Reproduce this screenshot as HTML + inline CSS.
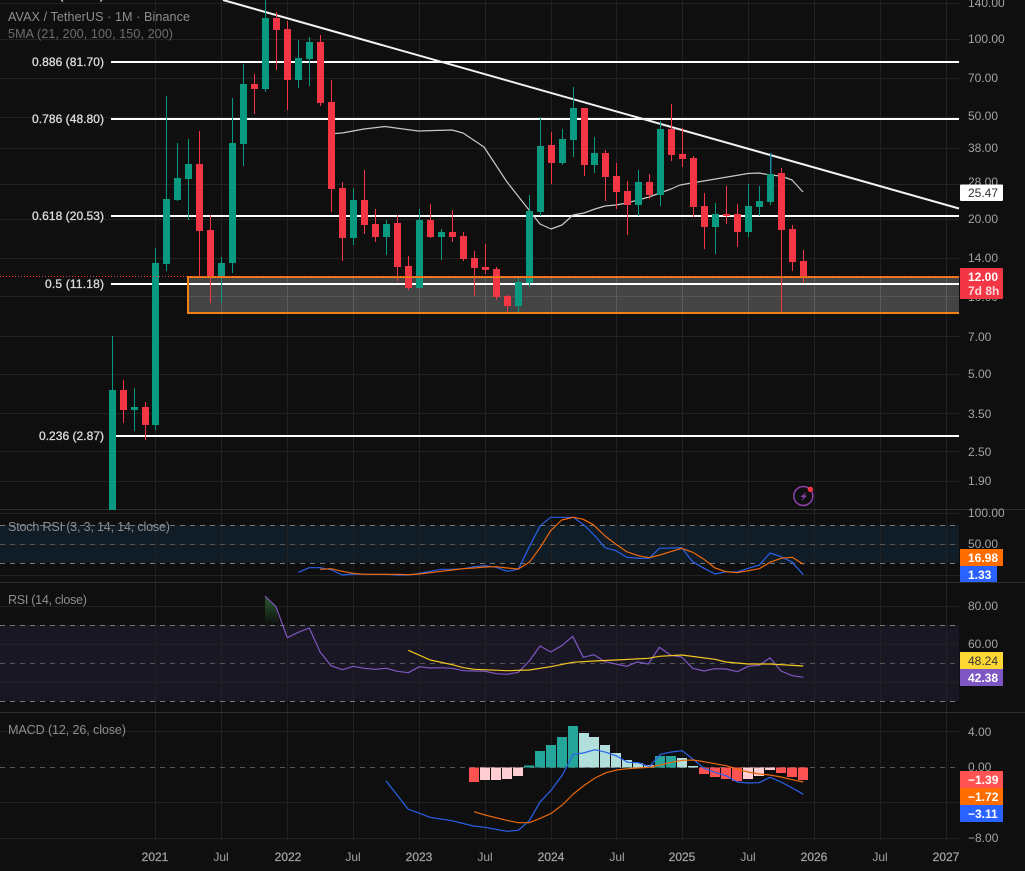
<!DOCTYPE html>
<html><head><meta charset="utf-8"><title>AVAX / TetherUS</title>
<style>
html,body{margin:0;padding:0;background:#0f0f0f;width:1025px;height:871px;overflow:hidden}
svg{display:block;font-family:"Liberation Sans",sans-serif;font-size:12px}
.ax{fill:#a3a3a3}
.lg{font-size:12.6px}
.fib{fill:#dedede;stroke:#dedede;stroke-width:.3px;text-anchor:end}
.t{fill:#a3a3a3;text-anchor:middle}
.y{stroke:#a3a3a3;stroke-width:.25px}
.b{fill:#fff;font-weight:bold}
.ln{fill:none;stroke-width:1.2;stroke-linejoin:round}
</style></head><body>
<svg width="1025" height="871" viewBox="0 0 1025 871" xmlns="http://www.w3.org/2000/svg">
<rect width="1025" height="871" fill="#0f0f0f"/>
<!-- bands -->
<rect x="0" y="525" width="959" height="38" fill="#101c26"/>
<rect x="0" y="625" width="959" height="76" fill="#1a1724"/>
<!-- grid -->
<path stroke="#222" stroke-width="1" fill="none" shape-rendering="crispEdges" d="M155.5 0V840M221.5 0V840M287.5 0V840M353.5 0V840M419.5 0V840M485.5 0V840M551.5 0V840M616.5 0V840M682.5 0V840M748.5 0V840M814.5 0V840M880.5 0V840M946.5 0V840
M0 3.5H959M0 39.5H959M0 78.5H959M0 117.5H959M0 148.5H959M0 184.5H959M0 219.5H959M0 258.5H959M0 296.5H959M0 336.5H959M0 374.5H959M0 413.5H959M0 451.5H959M0 481.5H959M0 513.5H959M0 544.5H959M0 575.5H959M0 606.5H959M0 644.5H959M0 682.5H959M0 731.5H959M0 802.5H959M0 838.5H959"/>
<!-- pane separators -->
<path stroke="#2e2e2e" stroke-width="1" shape-rendering="crispEdges" d="M0 509.5H1025M0 582.5H1025M0 712.5H1025"/>
<!-- dashed levels -->
<path stroke="#787878" stroke-width="1" stroke-dasharray="5 5" shape-rendering="crispEdges" d="M0 525.5H959M0 563.5H959M0 625.5H959M0 701.5H959"/>
<path stroke="#565656" stroke-width="1" stroke-dasharray="5 5" shape-rendering="crispEdges" d="M0 544.5H959M0 663.5H959M0 767.5H959"/>
<!-- zone -->
<rect x="188" y="277" width="771" height="36" fill="#444444"/>
<path stroke="#555" stroke-width="1" shape-rendering="crispEdges" d="M188 296.5H959"/>
<path stroke="#5c5c5c" stroke-width="1" shape-rendering="crispEdges" d="M221.5 277V313M287.5 277V313M353.5 277V313M419.5 277V313M485.5 277V313M551.5 277V313M616.5 277V313M682.5 277V313M748.5 277V313M814.5 277V313M880.5 277V313M946.5 277V313"/>
<!-- fib lines -->
<path stroke="#fff" stroke-width="2" shape-rendering="crispEdges" d="M111 62H959M111 119H959M111 216H959M111 284H959M111 436H959"/>
<!-- SMA -->
<polyline class="ln" stroke="#c8c8c8" stroke-width="1" points="335,133.5 342,133 364,129 385,126.5 418,131 452,130 463,133 484,147 507,182 529,210 540,224 551,229 562,225 573,215 584,213 595,209 605,206 616,205 627,203 649,197 660,193 671,189 680,185 748,173.5 759,173 770,175 781,176 792,180 803,192"/>
<!-- trend -->
<line x1="223" y1="0" x2="959" y2="208.5" stroke="#f2f2f2" stroke-width="2"/>
<!-- candles -->
<g shape-rendering="crispEdges" fill="none">
<path stroke="#089981" stroke-width="1" d="M112.5 336V390M155.5 248V263M155.5 425V430M166.5 96V199M166.5 264V271M177.5 143V178M177.5 200V201M188.5 139V164M188.5 179V220M134.5 388V407M134.5 410V431M221.5 257V263M221.5 277V303M232.5 98V143M232.5 263V273M243.5 64V84M243.5 144V166M265.5 0V18M265.5 89V92M298.5 40V58M298.5 80V88M309.5 37V42M309.5 59V86M353.5 188V200M353.5 238V245M386.5 220V224M386.5 237V255M419.5 209V220M441.5 229V232M441.5 237V260M518.5 277V282M518.5 306V312M529.5 195V211M529.5 283V287M540.5 117V146M540.5 212V216M562.5 129V139M562.5 163V165M573.5 87V108M573.5 140V157M594.5 137V153M594.5 165V173M638.5 170V182M638.5 205V216M660.5 121V129M660.5 195V206M715.5 203V214M715.5 227V254M748.5 184V206M748.5 232V237M759.5 186V201M759.5 207V216M770.5 202V205"/>
<path stroke="#1b8aa6" stroke-width="1.5" d="M770.5 153V174"/>
<path stroke="#f23645" stroke-width="1" d="M123.5 380V390M123.5 410V423M145.5 402V407M145.5 425V440M199.5 131V164M199.5 231V277M210.5 215V230M210.5 277V303M254.5 74V84M254.5 89V114M276.5 12V18M276.5 30V70M287.5 21V29M287.5 80V110M320.5 35V42M320.5 103V106M331.5 80V102M331.5 189V212M342.5 182V188M342.5 238V261M364.5 170V200M364.5 225V234M375.5 209V224M375.5 237V242M397.5 215V223M397.5 267V281M408.5 256V266M408.5 288V290M430.5 204V220M430.5 237V238M452.5 210V232M452.5 237V242M463.5 232V236M463.5 259V261M474.5 251V258M474.5 268V296M485.5 244V267M485.5 270V274M496.5 267V269M496.5 297V300M507.5 295V296M507.5 306V313M551.5 132V145M551.5 163V184M584.5 108V176M605.5 150V153M605.5 177V201M616.5 163V176M616.5 192V209M627.5 181V191M627.5 205V235M649.5 174V182M649.5 195V199M671.5 104V129M671.5 155V161M682.5 128V154M682.5 159V167M693.5 156V158M693.5 207V217M704.5 193V206M704.5 227V249M726.5 186V214M726.5 216V224M737.5 204V214M737.5 232V247M781.5 168V173M781.5 230V313M792.5 225V229M792.5 262V271M803.5 250V261M803.5 277V283"/>
<path stroke="#089981" stroke-width="7" d="M112.5 390V510M134.5 407V410M155.5 263V425M166.5 199V264M177.5 178V200M188.5 164V179M221.5 263V277M232.5 143V263M243.5 84V144M265.5 18V89M298.5 58V80M309.5 42V59M353.5 200V238M386.5 224V237M419.5 220V288M441.5 232V237M518.5 282V306M529.5 211V283M540.5 146V212M562.5 139V163M573.5 108V140M594.5 153V165M638.5 182V205M660.5 129V195M715.5 214V227M748.5 206V232M759.5 201V207M770.5 174V202"/>
<path stroke="#f23645" stroke-width="7" d="M123.5 390V410M145.5 407V425M199.5 164V231M210.5 230V277M254.5 84V89M276.5 18V30M287.5 29V80M320.5 42V103M331.5 102V189M342.5 188V238M364.5 200V225M375.5 224V237M397.5 223V267M408.5 266V288M430.5 220V237M452.5 232V237M463.5 236V259M474.5 258V268M485.5 267V270M496.5 269V297M507.5 296V306M551.5 145V163M584.5 108V165M605.5 153V177M616.5 176V192M627.5 191V205M649.5 182V195M671.5 129V155M682.5 154V159M693.5 158V207M704.5 206V227M726.5 214V216M737.5 214V232M781.5 173V230M792.5 229V262M803.5 261V277"/>
</g>
<!-- zone border -->
<path d="M959 277H188V313H959" fill="none" stroke="#f57f17" stroke-width="2" shape-rendering="crispEdges"/>
<!-- last price -->
<line x1="0" y1="276.5" x2="959" y2="276.5" stroke="#f23645" stroke-width="1" stroke-dasharray="1 2"/>
<!-- legend -->
<text class="lg" x="8" y="21" fill="#8e8e8e" textLength="182" lengthAdjust="spacing">AVAX / TetherUS · 1M · Binance</text>
<text class="lg" x="8" y="38" fill="#6e6e6e" textLength="165" lengthAdjust="spacing">5MA (21, 200, 100, 150, 200)</text>
<text class="lg" x="8" y="531" fill="#8e8e8e" textLength="162" lengthAdjust="spacing">Stoch RSI (3, 3, 14, 14, close)</text>
<text class="lg" x="8" y="604" fill="#8e8e8e" textLength="79" lengthAdjust="spacing">RSI (14, close)</text>
<text class="lg" x="8" y="734" fill="#8e8e8e" textLength="118" lengthAdjust="spacing">MACD (12, 26, close)</text>
<!-- fib labels -->
<text class="fib" x="104" y="-1">1 (142.83)</text>
<text class="fib" x="32" y="66" text-anchor="start" style="text-anchor:start" textLength="72">0.886 (81.70)</text>
<text class="fib" x="32" y="123" style="text-anchor:start" textLength="72">0.786 (48.80)</text>
<text class="fib" x="32" y="220" style="text-anchor:start" textLength="72">0.618 (20.53)</text>
<text class="fib" x="45" y="288" style="text-anchor:start" textLength="59">0.5 (11.18)</text>
<text class="fib" x="39" y="440" style="text-anchor:start" textLength="65">0.236 (2.87)</text>
<!-- icon -->
<circle cx="803.3" cy="496" r="9.5" fill="none" stroke="#8e3fae" stroke-width="1.5"/>
<path d="M806.5 491.5L800.5 497H803.5L801 501.5L807 495.5H804Z" fill="#8e3fae"/>
<circle cx="810.4" cy="489.3" r="2.7" fill="#f23645"/>
<!-- stoch -->
<defs><linearGradient id="g" x1="0" y1="0" x2="0" y2="1"><stop offset="0" stop-color="#2a5a30"/><stop offset="1" stop-color="#2a5a30" stop-opacity="0"/></linearGradient></defs>
<polygon points="265,596 276,607 280,625 265,625" fill="url(#g)"/>
<polyline class="ln" stroke="#2962e8" points="298.3,572.3 309.3,567.7 320,567.7 331.7,570 342.3,575 353.3,574 364.3,574.3 375.3,574.3 386.3,574.3 397.3,575 408.3,575 419.3,573.3 430.3,571.3 441.3,569.3 452.3,569.3 463.3,568.7 474.3,566.7 485.3,565.7 496.3,567.3 507.3,571.3 518.3,569.3 529.3,546.7 540.3,525.7 550.7,517.3 573.3,517.3 584.3,525.3 595,536 605,547.7 616,550.7 626.7,557.3 638.3,558.3 649.3,558.3 659.3,548.3 681.7,547.7 692.7,561.7 704,568.3 715,574 726,571.7 737.3,572 748.3,568.3 759.3,565 770,553 781,556.7 792.3,562.3 803.3,574.7"/>
<polyline class="ln" stroke="#f0690a" points="320,569.3 331,568.7 342.3,571.3 353.3,573.3 364.3,574.3 375.3,574.3 386.3,574.3 397.3,574.3 408.3,574.7 419.3,574 430.3,572.7 441.3,571.3 452.3,570 463.3,568.7 474.3,568 485.3,567 496.3,566.7 507.3,568 518.3,569 529.3,562.3 540.3,547.3 550.7,530.7 561.7,520 573.3,517.3 583.3,519.3 593.3,524.7 605,536 616,544.3 626.7,551.7 638.3,555.7 649.3,557.7 660,555 670.7,551.7 681.7,548.3 692.7,552.3 704,559.3 715,568 726,571.7 737.3,572.7 748.3,570.7 759.3,568.7 770,562.3 781,558.3 792.3,557.3 803.3,564.3"/>
<!-- rsi -->
<polyline class="ln" stroke="#7e57c2" points="265,596 276,606.7 287.3,637.7 298.3,632.3 309.3,628 320,651.7 331,665.7 342.3,669.7 353.3,666.3 364.3,668.3 375.3,669.3 386.3,668.3 397.3,671.3 408.3,672.7 419.3,666.7 430.3,668 441.3,667.7 452.3,668.3 463.3,670.7 474.3,671 485.3,671.3 496.3,673.7 507.3,674.3 518.3,672.3 529.3,661 540,646 550.7,652 561.7,645.7 572.7,636.3 583.3,657.3 594,654.7 605,661.7 616,664 626.7,666.3 637.3,662 648.3,664 659.3,647.3 670.7,655.3 681.7,657 692.7,668.3 704,671 715,668.7 726,669 737.3,671.7 748.3,666.3 759.3,665.3 770,657.7 781,671 792.3,675.7 803.3,677.3"/>
<polyline class="ln" stroke="#f5c820" points="408.3,650.3 430.3,660 452.3,664.7 463.3,667.7 474.3,669.3 507.3,670.7 529.3,670 550.7,666.7 572.7,662.3 594,661 616,660 648.3,658.3 659.3,656.3 681.7,655 715,659.3 726,662 748.3,664 770,664 803.3,666"/>
<!-- macd hist -->
<g shape-rendering="crispEdges" fill="none" stroke-width="10">
<path stroke="#ff5252" d="M474 767.5V782M704 767.5V774M715 767.5V777M726 767.5V779M737 767.5V781M781 767.5V773M792 767.5V777M803 767.5V780"/>
<path stroke="#ffcdd2" d="M485 767.5V780M496 767.5V780M507 767.5V779M518 767.5V776M748 767.5V779M759 767.5V776M770 767.5V770"/>
<path stroke="#26a69a" d="M529 767.5V765.5M540 767.5V751M551 767.5V745M562 767.5V737M573 767.5V726M660 767.5V756M671 767.5V756"/>
<path stroke="#b2dfdb" d="M584 767.5V733M594 767.5V737M605 767.5V745M616 767.5V753M627 767.5V760M638 767.5V763M649 767.5V765M682 767.5V758M693 767.5V766"/>
</g>
<polyline class="ln" stroke="#2962e8" points="386,780.7 408,809 430,817.3 451.7,820.7 473.3,826 485,827.3 506.7,831.3 518.3,830.3 529.3,820.7 540.3,801.7 551.3,790 562.3,775 573.3,754.3 583.3,753 595,749.7 606,752.3 616.7,756 627.7,762.3 638.3,762.7 649.3,766.7 660.3,754.3 671.3,752 682.3,750.7 692.7,759 704,768.3 715,772.3 726,775.7 737.3,782 748.3,783 759.3,782.7 770,777.3 781,782 792.3,788 803.3,794.3"/>
<polyline class="ln" stroke="#e8680c" points="474,811.7 485,815 506.7,820.3 518.3,822.7 529.3,822.7 540.3,818.3 551.3,813.3 562.3,805 573.3,794 583.3,786 595,778 606,772.7 616.7,770 627.7,768.7 638.3,768 649.3,767.3 660.3,765 671.3,762.3 682.3,760.3 693.3,760 704,761.7 715,763.7 726,765.7 737.3,769 748.3,772 759.3,774 770,775 781,777 792.3,779.7 803.3,782"/>
<!-- right axis -->
<g class="ax">
<text x="968" y="7">140.00</text><text x="968" y="43">100.00</text><text x="968" y="82">70.00</text><text x="968" y="120">50.00</text><text x="968" y="152">38.00</text><text x="968" y="186">28.00</text><text x="968" y="223">20.00</text><text x="968" y="262">14.00</text><text x="968" y="301">10.00</text><text x="968" y="341">7.00</text><text x="968" y="378">5.00</text><text x="968" y="418">3.50</text><text x="968" y="456">2.50</text><text x="968" y="485">1.90</text>
<text x="968" y="517">100.00</text><text x="968" y="548">50.00</text>
<text x="968" y="610">80.00</text><text x="968" y="648">60.00</text>
<text x="968" y="736">4.00</text><text x="968" y="771">0.00</text><text x="968" y="842">−8.00</text>
</g>
<!-- badges -->
<rect x="960" y="184.5" width="43" height="16.5" fill="#fff" rx="1"/>
<text x="968" y="197" fill="#333">25.47</text>
<rect x="960" y="268" width="43" height="31" fill="#f23645" rx="1"/>
<text x="968" y="281" class="b">12.00</text>
<text x="968" y="295" fill="#ffd6da" font-weight="bold">7d 8h</text>
<rect x="960" y="549" width="43" height="17" fill="#ff6d00"/><text x="968" y="562" class="b">16.98</text>
<rect x="960" y="566" width="37" height="16" fill="#2962ff"/><text x="968" y="579" class="b">1.33</text>
<rect x="960" y="652" width="43" height="17" fill="#fdd835"/><text x="968" y="665" fill="#333">48.24</text>
<rect x="960" y="669" width="43" height="17" fill="#7e57c2"/><text x="968" y="682" class="b">42.38</text>
<rect x="960" y="771" width="43" height="17" fill="#ff5252"/><text x="968" y="784" class="b">−1.39</text>
<rect x="960" y="788" width="43" height="17" fill="#ff6d00"/><text x="968" y="801" class="b">−1.72</text>
<rect x="960" y="805" width="43" height="17" fill="#2962ff"/><text x="968" y="818" class="b">−3.11</text>
<!-- time axis -->
<g class="t">
<text class="y" x="155" y="861">2021</text><text x="221" y="861">Jul</text><text class="y" x="288" y="861">2022</text><text x="353" y="861">Jul</text><text class="y" x="419" y="861">2023</text><text x="485" y="861">Jul</text><text class="y" x="551" y="861">2024</text><text x="617" y="861">Jul</text><text class="y" x="682" y="861">2025</text><text x="748" y="861">Jul</text><text class="y" x="814" y="861">2026</text><text x="880" y="861">Jul</text><text class="y" x="946" y="861">2027</text>
</g>
</svg>
</body></html>
